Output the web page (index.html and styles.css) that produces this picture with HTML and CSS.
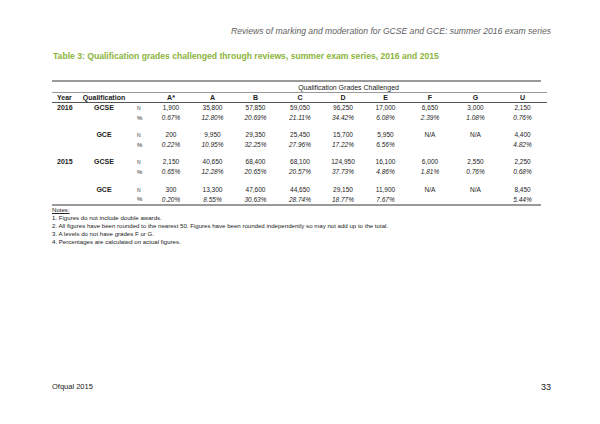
FILE: index.html
```html
<!DOCTYPE html>
<html lang="en">
<head>
<meta charset="utf-8">
<title>Reviews of marking and moderation</title>
<link rel="stylesheet" href="styles.css">
</head>
<body>
<div class="page">
  <div class="running">Reviews of marking and moderation for GCSE and GCE: summer 2016 exam series</div>
  <h1 class="title">Table 3: Qualification grades challenged through reviews, summer exam series, 2016 and 2015</h1>
  <div class="rule"></div>
  <table class="grades">
    <colgroup>
      <col class="c-year"><col class="c-qual"><col class="c-unit">
      <col class="c-as"><col class="c-a"><col class="c-b"><col class="c-c"><col class="c-d">
      <col class="c-e"><col class="c-f"><col class="c-g"><col class="c-u">
    </colgroup>
    <tr class="label-row">
      <td></td><td></td><td></td>
      <td colspan="9" class="label">Qualification Grades Challenged</td>
    </tr>
    <tr class="head-row">
      <th class="year">Year</th><th>Qualification</th><th></th>
      <th>A*</th><th>A</th><th>B</th><th>C</th><th>D</th><th>E</th><th>F</th><th>G</th><th>U</th>
    </tr>
    <tr class="n-row">
      <td class="year">2016</td><td class="qual">GCSE</td><td class="unit n">N</td>
      <td>1,900</td><td>35,800</td><td>57,850</td><td>59,050</td><td>96,250</td><td>17,000</td><td>6,650</td><td>3,000</td><td>2,150</td>
    </tr>
    <tr class="p-row">
      <td></td><td></td><td class="unit">%</td>
      <td>0.67%</td><td>12.80%</td><td>20.69%</td><td>21.11%</td><td>34.42%</td><td>6.08%</td><td>2.39%</td><td>1.08%</td><td>0.76%</td>
    </tr>
    <tr class="gap"><td colspan="12"></td></tr>
    <tr class="n-row">
      <td class="year"></td><td class="qual">GCE</td><td class="unit n">N</td>
      <td>200</td><td>9,950</td><td>29,350</td><td>25,450</td><td>15,700</td><td>5,950</td><td>N/A</td><td>N/A</td><td>4,400</td>
    </tr>
    <tr class="p-row">
      <td></td><td></td><td class="unit">%</td>
      <td>0.22%</td><td>10.95%</td><td>32.25%</td><td>27.96%</td><td>17.22%</td><td>6.56%</td><td></td><td></td><td>4.82%</td>
    </tr>
    <tr class="gap"><td colspan="12"></td></tr>
    <tr class="n-row">
      <td class="year">2015</td><td class="qual">GCSE</td><td class="unit n">N</td>
      <td>2,150</td><td>40,650</td><td>68,400</td><td>68,100</td><td>124,950</td><td>16,100</td><td>6,000</td><td>2,550</td><td>2,250</td>
    </tr>
    <tr class="p-row">
      <td></td><td></td><td class="unit">%</td>
      <td>0.65%</td><td>12.28%</td><td>20.65%</td><td>20.57%</td><td>37.73%</td><td>4.86%</td><td>1.81%</td><td>0.76%</td><td>0.68%</td>
    </tr>
    <tr class="gap gap-last"><td colspan="12"></td></tr>
    <tr class="n-row">
      <td class="year"></td><td class="qual">GCE</td><td class="unit n">N</td>
      <td>300</td><td>13,300</td><td>47,600</td><td>44,650</td><td>29,150</td><td>11,900</td><td>N/A</td><td>N/A</td><td>8,450</td>
    </tr>
    <tr class="p-row p-last">
      <td></td><td></td><td class="unit">%</td>
      <td>0.20%</td><td>8.55%</td><td>30.63%</td><td>28.74%</td><td>18.77%</td><td>7.67%</td><td></td><td></td><td>5.44%</td>
    </tr>
  </table>
  <div class="rule"></div>
  <div class="notes">
    <div class="notes-head">Notes:</div>
    <div>1. Figures do not include double awards.</div>
    <div>2. All figures have been rounded to the nearest 50. Figures have been rounded independently so may not add up to the total.</div>
    <div>3. A levels do not have grades F or G.</div>
    <div>4. Percentages are calculated on actual figures.</div>
  </div>
  <div class="footer">
    <span class="org">Ofqual 2015</span>
    <span class="pageno">33</span>
  </div>
</div>
</body>
</html>
```
FILE: styles.css
```css
html, body {
  margin: 0;
  padding: 0;
  background: #ffffff;
}

body {
  font-family: "Liberation Sans", Arial, sans-serif;
  color: #222222;
}

.page {
  width: 600px;
  height: 424px;
  box-sizing: border-box;
  padding: 26px 0 32px 52px;
  display: flex;
  flex-direction: column;
}

.running {
  width: 499px;
  text-align: right;
  font-style: italic;
  font-size: 8.6px;
  line-height: 11px;
  color: #606060;
}

.title {
  margin: 14px 0 0 1px;
  font-size: 8.6px;
  line-height: 10px;
  font-weight: bold;
  color: #8cb43c;
}

.rule {
  width: 489px;
  height: 2px;
  background: #9a9a9a;
}

.title + .rule {
  margin-top: 19px;
}

.grades {
  border-collapse: collapse;
  table-layout: fixed;
  width: 495px;
  font-size: 6.5px;
}

.c-year { width: 28px; }
.c-qual { width: 48px; }
.c-unit { width: 22px; }
.c-as { width: 42px; }
.c-a { width: 41px; }
.c-b { width: 45px; }
.c-c { width: 44px; }
.c-d { width: 42px; }
.c-e { width: 43px; }
.c-f { width: 46px; }
.c-g { width: 45px; }
.c-u { width: 49px; }

.grades td, .grades th {
  padding: 0;
  text-align: center;
  white-space: nowrap;
}

.label-row td {
  height: 9px;
  line-height: 9px;
  font-size: 7px;
  border-bottom: 1px solid #9a9a9a;
  padding-top: 1px;
}

.head-row th {
  height: 8px;
  line-height: 8px;
  font-size: 7px;
  font-weight: bold;
  border-bottom: 1px solid #555555;
  padding-top: 1px;
}

.grades .year {
  text-align: left;
  padding-left: 5px;
  font-weight: bold;
}

.grades .qual {
  font-weight: bold;
  font-size: 7px;
}

.n-row td, .p-row td {
  height: 10px;
  line-height: 10px;
}

.p-last td {
  height: 9px;
  line-height: 9px;
}

.n-row td.year {
  font-size: 7px;
}

.p-row td {
  font-style: italic;
}

.grades td.unit {
  font-style: normal;
  text-align: left;
  padding-left: 9px;
  font-size: 6px;
}

.grades td.n {
  font-size: 5px;
  color: #444444;
}

.gap td {
  height: 7px;
  line-height: 7px;
}

.gap-last td {
  height: 8px;
  line-height: 8px;
}

.notes {
  font-size: 6.1px;
  line-height: 8px;
}

.notes-head {
  text-decoration: underline;
}

.footer {
  margin-top: auto;
  width: 499px;
  display: flex;
  justify-content: space-between;
  align-items: center;
  line-height: 10px;
}

.org {
  font-size: 7.5px;
}

.pageno {
  font-size: 9px;
}
```
